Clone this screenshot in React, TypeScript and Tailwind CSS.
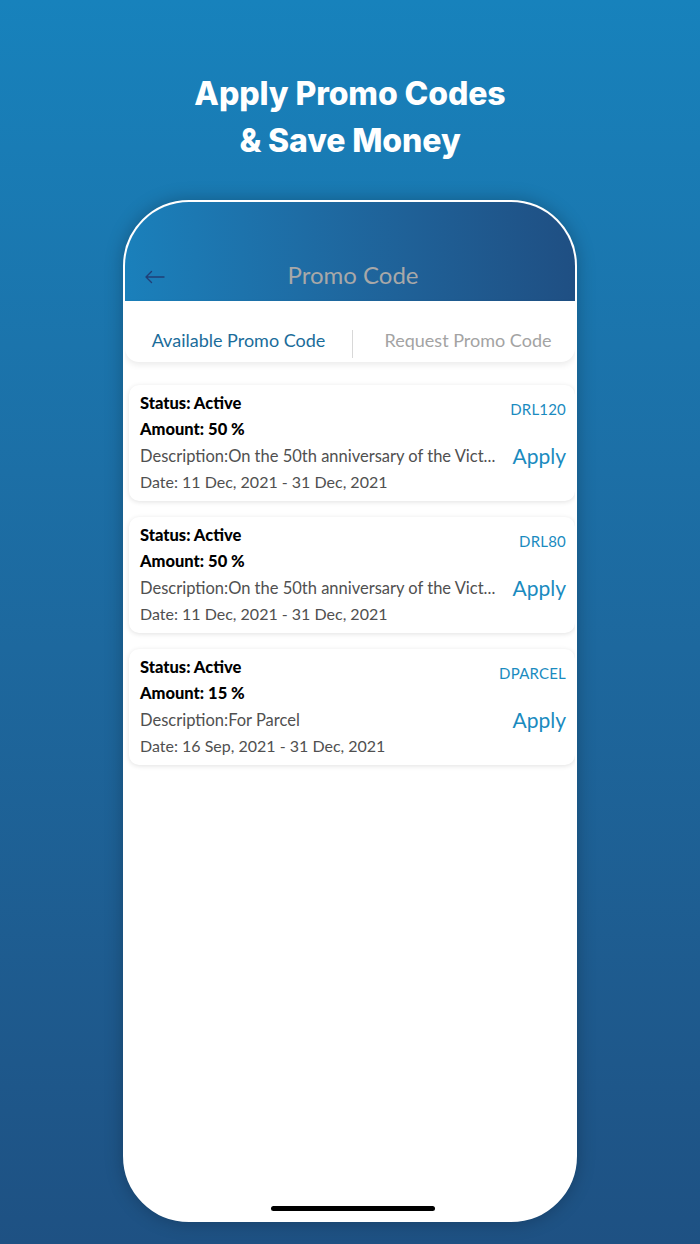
import React from "react";

const promos = [
  { code: "DRL120", amount: "50 %", desc: "Description:On the 50th anniversary of the Vict...", date: "Date: 11 Dec, 2021 - 31 Dec, 2021" },
  { code: "DRL80", amount: "50 %", desc: "Description:On the 50th anniversary of the Vict...", date: "Date: 11 Dec, 2021 - 31 Dec, 2021" },
  { code: "DPARCEL", amount: "15 %", desc: "Description:For Parcel", date: "Date: 16 Sep, 2021 - 31 Dec, 2021" },
];

export default function App() {
  return (
    <div
      className="w-[700px] h-[1244px] bg-gradient-to-b from-[#1782bc] to-[#1e5183] flex flex-col items-center overflow-hidden"
      style={{ fontFamily: "Lato, 'Noto Sans', sans-serif" }}
    >
      <h1
        className="mt-[70px] text-white text-[32px] leading-[47px] font-extrabold text-center tracking-[-0.1px]"
        style={{ fontFamily: "Inter, 'Noto Sans', sans-serif" }}
      >
        Apply Promo Codes
        <br />& Save Money
      </h1>

      <div className="mt-[36px] w-[454px] h-[1022px] rounded-[66px] border-2 border-white bg-white overflow-hidden flex flex-col shadow-[0_0_18px_rgba(0,0,0,0.25)]">
        <div className="h-[99px] shrink-0 bg-gradient-to-r from-[#1a80bb] to-[#1f4f83] flex items-end">
          <div className="relative w-full h-[48px] flex items-center justify-center">
            <svg
              className="absolute left-[19px] top-[17px]"
              width="22"
              height="14"
              viewBox="0 0 22 14"
              fill="none"
              stroke="#213f77"
              strokeWidth="1.4"
              strokeLinecap="round"
              strokeLinejoin="round"
            >
              <path d="M20 7H2M7.5 1.5L2 7l5.5 5.5" />
            </svg>
            <span className="text-[24px] text-[#a8a8a8] mb-[5px] ml-[6px]">Promo Code</span>
          </div>
        </div>

        <div className="h-[61px] shrink-0 flex items-stretch bg-white rounded-b-[14px] shadow-[0_3px_6px_rgba(0,0,0,0.08)] relative z-10">
          <div className="w-[227px] flex items-center justify-center pt-[18px] text-[18px] text-[#1a6c9a]">
            Available Promo Code
          </div>
          <div className="w-px bg-[#d8d8d8] mt-[29px] mb-[4px]" />
          <div className="flex-1 flex items-center justify-center pt-[18px] pl-[8px] text-[18px] text-[#a3a3a3]">
            Request Promo Code
          </div>
        </div>

        <div className="flex flex-col gap-[16px] pt-[23px] pl-[4px]">
          {promos.map((p) => (
            <div
              key={p.code}
              className="h-[116px] rounded-[10px] bg-white shadow-[0_1px_5px_rgba(0,0,0,0.12)] flex pl-[11px] pr-[9px] pt-[5px] pb-[6px]"
            >
              <div className="flex-1 min-w-0 flex flex-col text-[16px] leading-[26.3px]">
                <div className="font-black text-black text-[16.5px]">Status: Active</div>
                <div className="font-black text-black text-[16.5px]">Amount: {p.amount}</div>
                <div className="text-[#505050] text-[16.5px] whitespace-nowrap">{p.desc}</div>
                <div className="text-[#505050]">{p.date}</div>
              </div>
              <div className="flex flex-col items-end shrink-0">
                <div className="mt-[9px] text-[15px] leading-[20px] text-[#1a8bc0] tracking-[0.2px]">{p.code}</div>
                <div className="mt-[22px] text-[21px] leading-[30px] text-[#1a8bc0]">Apply</div>
              </div>
            </div>
          ))}
        </div>

        <div className="flex-1" />
        <div className="flex justify-center shrink-0 pb-[9px] pl-[6px]">
          <div className="w-[164px] h-[5px] rounded-full bg-black" />
        </div>
      </div>
    </div>
  );
}
